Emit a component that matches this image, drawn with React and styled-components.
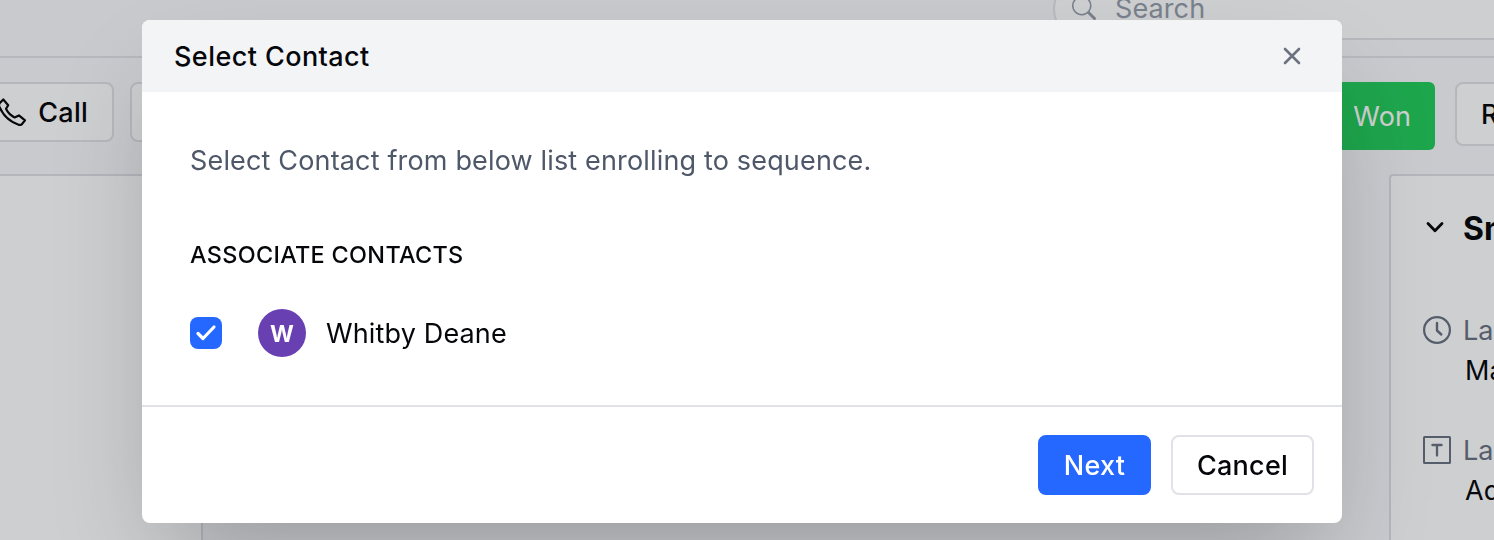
import React from 'react'
import styled, { createGlobalStyle } from 'styled-components'
import { BsSearch } from 'react-icons/bs'

const GlobalStyle = createGlobalStyle`
  * {
    box-sizing: border-box;
  }

  body {
    margin: 0;
    overflow: hidden;
    font-family: Inter, 'Liberation Sans', sans-serif;
    font-size: 27px;
    color: #06070b;
    background: #f8f9fd;
  }

  button {
    font: inherit;
    color: inherit;
  }

  svg {
    flex: none;
  }
`

const Page = styled.div`
  display: flex;
  flex-direction: column;
  width: 100%;
  height: 540px;
  overflow: hidden;
`

const TopBar = styled.header`
  display: flex;
  flex: none;
  align-items: flex-end;
  justify-content: flex-end;
  height: 58px;
  padding-bottom: 16px;
  border-bottom: 2px solid #e1e3e8;
`

const SearchBox = styled.div`
  display: flex;
  align-items: center;
  gap: 19px;
  width: 471px;
  height: 62px;
  margin-right: -30px;
  padding: 0 0 2px 17px;
  border: 2px solid #e1e3e8;
  border-radius: 31px;
  color: #969eac;
  background: #fff;
  letter-spacing: 0.1px;
`

const ActionBar = styled.div`
  display: flex;
  flex: none;
  align-items: flex-start;
  justify-content: space-between;
  height: 116px;
  padding-top: 24px;
`

const ActionGroup = styled.div`
  display: flex;
  align-items: flex-start;
  gap: ${(props) => props.$gap}px;
  margin-left: ${(props) => props.$left || 0}px;
  margin-right: ${(props) => props.$right || 0}px;
`

const Button = styled.button`
  display: flex;
  align-items: center;
  justify-content: ${(props) => props.$align || 'center'};
  gap: 12px;
  width: ${(props) => props.$width}px;
  height: ${(props) => props.$height || 60}px;
  padding: 0 24px;
  border: 2px solid #e1e2e8;
  border-radius: 8px;
  background: #fff;
  font-weight: 500;
  letter-spacing: 0.25px;
  white-space: nowrap;
`

const PrimaryButton = styled(Button)`
  border-color: #2468ff;
  background: #2468ff;
  color: #fff;
`

const WonButton = styled(Button)`
  border: none;
  border-radius: 6px;
  background: #24cc5c;
  color: #fff;
  font-weight: 400;
  letter-spacing: 0.1px;
`

const Columns = styled.div`
  display: flex;
  flex: 1;
  justify-content: space-between;
`

const SidePanel = styled.div`
  width: 203px;
  border: solid #dfe0e7;
  border-width: 2px 2px 0 0;
  background: #fff;
`

const SummaryPanel = styled.aside`
  width: 105px;
  padding: 32px 0 0 32px;
  overflow: hidden;
  border: solid #dfe0e7;
  border-width: 2px 0 0 2px;
  border-top-left-radius: 4px;
  background: #fff;
  white-space: nowrap;
`

const SummaryTitle = styled.h2`
  display: flex;
  align-items: center;
  gap: 16px;
  height: 40px;
  margin: 0 0 63px;
  font-size: 32px;
  font-weight: 700;
`

const Field = styled.div`
  display: grid;
  grid-template-columns: 28px auto;
  column-gap: 12px;
  height: 120px;
  line-height: 40px;
  align-content: start;
  align-items: center;

  svg {
    margin-bottom: 2px;
  }
`

const FieldLabel = styled.span`
  color: #697282;
`

const FieldValue = styled.span`
  grid-column: 2;
  padding-left: 2px;
`

const Overlay = styled.div`
  position: fixed;
  inset: 0;
  display: flex;
  justify-content: center;
  align-items: flex-start;
  padding: 20px 152px 0 142px;
  background: rgba(9, 14, 20, 0.2);
`

const Modal = styled.div`
  width: 1200px;
  height: 503px;
  display: flex;
  flex-direction: column;
  overflow: hidden;
  border-radius: 8px;
  background: #fff;
  box-shadow: 0 50px 100px -24px rgba(0, 0, 0, 0.25);
`

const ModalHeader = styled.div`
  display: flex;
  align-items: center;
  justify-content: space-between;
  height: 72px;
  padding: 0 41px 0 32px;
  background: #f3f4f6;
`

const ModalTitle = styled.h1`
  margin: 0;
  font-size: 27px;
  font-weight: 500;
  line-height: 42px;
  padding-top: 2px;
  letter-spacing: 0.43px;
`

const CloseButton = styled.button`
  display: flex;
  padding: 0;
  border: none;
  background: none;
  color: #6a7280;
`

const ModalBody = styled.div`
  flex: 1;
  padding: 48px 48px 0;
`

const Description = styled.p`
  margin: 0;
  line-height: 42px;
  letter-spacing: 0.16px;
  color: #4e5869;
`

const SectionLabel = styled.h3`
  margin: 57px 0 0;
  font-size: 23.4px;
  font-weight: 500;
  line-height: 32px;
  letter-spacing: 0.33px;
`

const ContactRow = styled.label`
  display: flex;
  align-items: center;
  height: 48px;
  margin-top: 38px;
`

const ContactName = styled.span`
  padding-top: 2px;
  line-height: 40px;
  letter-spacing: 0.15px;
`

const Checkbox = styled.span`
  display: flex;
  width: 32px;
  height: 32px;
  border-radius: 8px;
  background: #2468ff;
`

const Avatar = styled.span`
  display: flex;
  align-items: center;
  justify-content: center;
  width: 48px;
  height: 48px;
  margin: 0 20px 0 36px;
  padding-top: 1px;
  border-radius: 50%;
  background: #6940b2;
  color: #fff;
  font-size: 23px;
  font-weight: 700;
`

const ModalFooter = styled.div`
  display: flex;
  justify-content: flex-end;
  gap: 20px;
  height: 118px;
  padding: 28px 28px 0;
  border-top: 2px solid #e1e2e8;
`

const PhoneIcon = () => (
  <svg width="28" height="28" viewBox="0 0 28 28" fill="none">
    <path
      d="M5.3 1.5L1.6 5.2C.8 6.2 1 8 1.7 9.4C5.5 17.8 11.5 23.6 20.6 26.7C21.8 27.1 23 27 23.8 26.2L27 22.4L20.9 17.4L16.6 19.4C12.8 17.6 9.8 14.6 8 10.8L10.2 7.2Z"
      stroke="currentColor"
      strokeWidth="2.2"
      strokeLinejoin="round"
    />
  </svg>
)

const CloseIcon = () => (
  <svg width="18" height="18" viewBox="0 0 18 18" fill="none">
    <path
      d="M2 2l14 14M16 2L2 16"
      stroke="currentColor"
      strokeWidth="2.6"
      strokeLinecap="round"
    />
  </svg>
)

const CheckIcon = () => (
  <svg width="32" height="32" viewBox="0 0 32 32" fill="none">
    <path
      d="M8 16.5l5 5L24 10"
      stroke="#fff"
      strokeWidth="3.2"
      strokeLinecap="round"
      strokeLinejoin="round"
    />
  </svg>
)

const ChevronIcon = () => (
  <svg width="24" height="24" viewBox="0 0 24 24" fill="none">
    <path
      d="M5 7.5l7 7.2L19 7.5"
      stroke="currentColor"
      strokeWidth="2.8"
      strokeLinecap="round"
      strokeLinejoin="round"
    />
  </svg>
)

const ClockIcon = () => (
  <svg width="28" height="28" viewBox="0 0 28 28" fill="none">
    <circle cx="14" cy="14" r="12.9" stroke="#697282" strokeWidth="2.2" />
    <path
      d="M14 7v7.5l4.3 4"
      stroke="#697282"
      strokeWidth="2.4"
      strokeLinecap="round"
      strokeLinejoin="round"
    />
  </svg>
)

const TextIcon = () => (
  <svg width="28" height="28" viewBox="0 0 28 28" fill="none">
    <rect
      x="1"
      y="1"
      width="26"
      height="26"
      rx="0.5"
      stroke="#697282"
      strokeWidth="2"
    />
    <path
      d="M9.4 9h9.2M14 9v10.5"
      stroke="#697282"
      strokeWidth="2.3"
      strokeLinecap="round"
    />
  </svg>
)

const fields = [
  { icon: <ClockIcon />, label: 'La', value: 'Ma' },
  { icon: <TextIcon />, label: 'La', value: 'Ad' },
]

const contacts = [{ name: 'Whitby Deane', initial: 'W' }]

const App = () => (
  <>
    <GlobalStyle />
    <Page>
      <TopBar>
        <SearchBox>
          <BsSearch size={24} />
          Search
        </SearchBox>
      </TopBar>
      <ActionBar>
        <ActionGroup $gap={16} $left={-26}>
          <Button $width={140} $align="flex-end">
            <PhoneIcon />
            Call
          </Button>
          <Button $width={140} />
        </ActionGroup>
        <ActionGroup $gap={20} $right={-61}>
          <WonButton $width={140} $height={68} $align="flex-end">
            Won
          </WonButton>
          <Button $width={100} $height={64} $align="flex-start">
            R
          </Button>
        </ActionGroup>
      </ActionBar>
      <Columns>
        <SidePanel />
        <SummaryPanel>
          <SummaryTitle>
            <ChevronIcon />
            Sm
          </SummaryTitle>
          {fields.map((field) => (
            <Field key={field.value}>
              {field.icon}
              <FieldLabel>{field.label}</FieldLabel>
              <FieldValue>{field.value}</FieldValue>
            </Field>
          ))}
        </SummaryPanel>
      </Columns>
    </Page>
    <Overlay>
      <Modal>
        <ModalHeader>
          <ModalTitle>Select Contact</ModalTitle>
          <CloseButton>
            <CloseIcon />
          </CloseButton>
        </ModalHeader>
        <ModalBody>
          <Description>
            Select Contact from below list enrolling to sequence.
          </Description>
          <SectionLabel>ASSOCIATE CONTACTS</SectionLabel>
          {contacts.map((contact) => (
            <ContactRow key={contact.name}>
              <Checkbox>
                <CheckIcon />
              </Checkbox>
              <Avatar>{contact.initial}</Avatar>
              <ContactName>{contact.name}</ContactName>
            </ContactRow>
          ))}
        </ModalBody>
        <ModalFooter>
          <PrimaryButton $width={113}>Next</PrimaryButton>
          <Button $width={143}>Cancel</Button>
        </ModalFooter>
      </Modal>
    </Overlay>
  </>
)

export default App
